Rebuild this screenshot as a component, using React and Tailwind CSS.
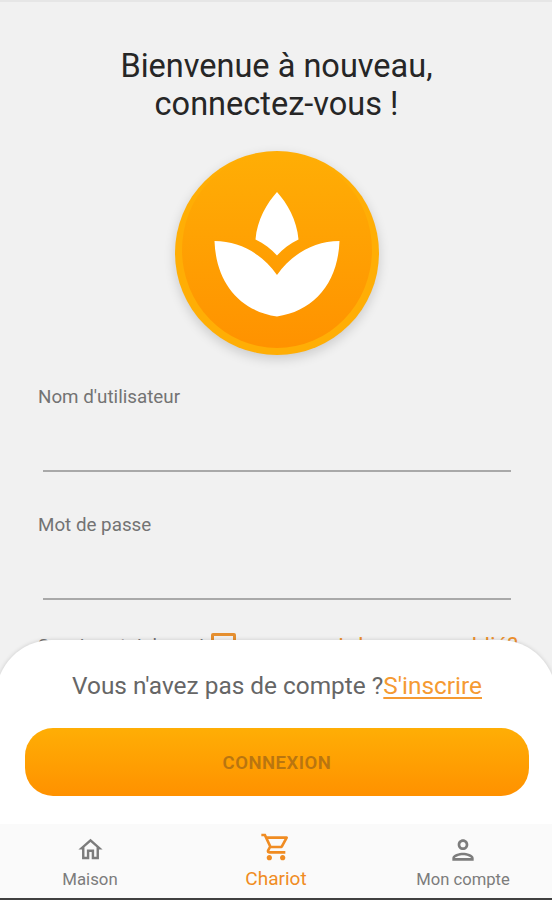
// Login page
import React from "react";

const fields = [
  { label: "Nom d'utilisateur", name: "username", type: "text" },
  { label: "Mot de passe", name: "password", type: "password" },
];

const tabs = [
  {
    label: "Maison",
    path: "M12 5.69l5 4.5V18h-2v-6H9v6H7v-7.81l5-4.5M12 3L2 12h3v8h6v-6h2v6h6v-8h3L12 3z",
    iconClass: "h-[29px] w-[29px]",
    labelClass: "mt-[3px] text-[16.8px]",
    active: false,
  },
  {
    label: "Chariot",
    path: "M15.55 13c.75 0 1.41-.41 1.75-1.03l3.58-6.49c.37-.66-.11-1.48-.87-1.48H5.21l-.94-2H1v2h2l3.6 7.59-1.35 2.44C4.52 15.37 5.48 17 7 17h12v-2H7l1.1-2h7.45zM6.16 6h12.15l-2.76 5H8.53L6.16 6zM7 18c-1.1 0-1.99.9-1.99 2S5.9 22 7 22s2-.9 2-2-.9-2-2-2zm10 0c-1.1 0-1.99.9-1.99 2s.89 2 1.99 2 2-.9 2-2-.9-2-2-2z",
    iconClass: "h-[32px] w-[32px]",
    labelClass: "mt-[4px] text-[19px]",
    active: true,
  },
  {
    label: "Mon compte",
    path: "M12 6c1.1 0 2 .9 2 2s-.9 2-2 2-2-.9-2-2 .9-2 2-2m0 10c2.7 0 5.8 1.29 6 2H6c.23-.72 3.31-2 6-2m0-12C9.79 4 8 5.79 8 8s1.79 4 4 4 4-1.79 4-4-1.79-4-4-4zm0 10c-2.67 0-8 1.34-8 4v2h16v-2c0-2.66-5.33-4-8-4z",
    iconClass: "h-[32px] w-[32px] -my-[1.5px]",
    labelClass: "mt-[4px] text-[16.6px]",
    active: false,
  },
];

function Logo() {
  return (
    <div className="mx-auto mt-[28px] h-[204px] w-[204px] rounded-full bg-[#ffae05] shadow-[0_4px_12px_rgba(0,0,0,0.16)]">
      <svg viewBox="0 0 204 204" className="h-full w-full">
        <defs>
          <linearGradient id="disc" x1="0" y1="0" x2="0" y2="1">
            <stop offset="0" stopColor="#ffae05" />
            <stop offset="1" stopColor="#ff9200" />
          </linearGradient>
        </defs>
        <ellipse cx="102" cy="99" rx="95" ry="98" fill="url(#disc)" />
        <path
          fill="#fff"
          d="M102 41C92 52 82 69 80.500 88.500C89 92.500 96 98 102 104.500C108 98 115 92.500 123.500 88.500C122 69 112 52 102 41ZM102 124C88 104 66 90 39.500 90C41 132 65 160 102 165.500C139 160 163 132 164.500 90C138 90 116 104 102 124Z"
        />
      </svg>
    </div>
  );
}

export default function App() {
  const [values, setValues] = React.useState({ username: "", password: "" });

  function handleChange(e) {
    const { name, value } = e.target;
    setValues(v => ({ ...v, [name]: value }));
  }

  return (
    <div className="flex h-[900px] w-[552px] flex-col overflow-hidden border-t-2 border-[#e6e6e6] bg-[#f1f1f1] font-['Roboto',sans-serif]">
      <main className="h-[638px] shrink-0">
        <div className="pl-[1px]">
          <h1 className="pt-[45px] text-center text-[32.5px] leading-[38px] text-[#262626]">
            Bienvenue à nouveau,
            <br />
            connectez-vous !
          </h1>
          <Logo />
        </div>

        <form className="mt-[28px] px-[38px]">
          {fields.map(f => (
            <label key={f.name} className="block h-[128px] text-[18.8px] leading-[28px] text-[#737373]">
              {f.label}
              <input
                name={f.name}
                type={f.type}
                value={values[f.name]}
                onChange={handleChange}
                className="ml-[5px] block h-[61px] w-[468px] border-b-2 border-[#a9a9a9] bg-transparent outline-none"
              />
            </label>
          ))}
          <div className="-mt-[6px] flex h-[26px] items-center whitespace-nowrap leading-[26px]">
            <span className="w-[173px] text-[19px] text-[#737373]">Souviens-toi de moi</span>
            <span className="h-[26px] w-[25px] shrink-0 rounded-[2px] border-[3px] border-[#e58f30]" />
            <a className="-mr-[4px] ml-auto pb-[2px] text-[22.5px] text-[#ed902c]">mot de passe oublié?</a>
          </div>
        </form>
      </main>

      {/* Bottom sheet, slides over the end of the form */}
      <section className="relative -mx-[4px] h-[184px] shrink-0 rounded-t-[56px] bg-white px-[29px] pt-[30px] shadow-[0_0_4px_rgba(0,0,0,0.16)]">
        <p className="pl-[2px] text-center text-[24.4px] leading-[31px] whitespace-nowrap text-[#666]">
          Vous n'avez pas de compte ?
          <a className="text-[#f59a32] underline decoration-2 underline-offset-[3px]">S'inscrire</a>
        </p>
        <button className="mt-[27px] h-[68px] w-[504px] rounded-[28px] bg-linear-to-b from-[#ffae05] to-[#ff9100] pt-[3px] text-[18.5px] font-semibold tracking-[0.5px] text-[#b97510]">
          CONNEXION
        </button>
      </section>

      <nav className="relative flex h-[74px] shrink-0 bg-[#fafafa]">
        {tabs.map(t => (
          <a
            key={t.label}
            className={`flex flex-col items-center ${t.active ? "w-[192px] pt-[7px] text-[#f08c22]" : "w-[180px] pt-[11px] text-[#7c7c7c] last:pl-[2px]"}`}
          >
            <svg viewBox="0 0 24 24" fill="currentColor" className={t.iconClass}>
              <path d={t.path} />
            </svg>
            <span className={`leading-[24px] ${t.labelClass}`}>{t.label}</span>
          </a>
        ))}
      </nav>
      <div className="h-[2px] shrink-0 bg-[#404040]" />
    </div>
  );
}
